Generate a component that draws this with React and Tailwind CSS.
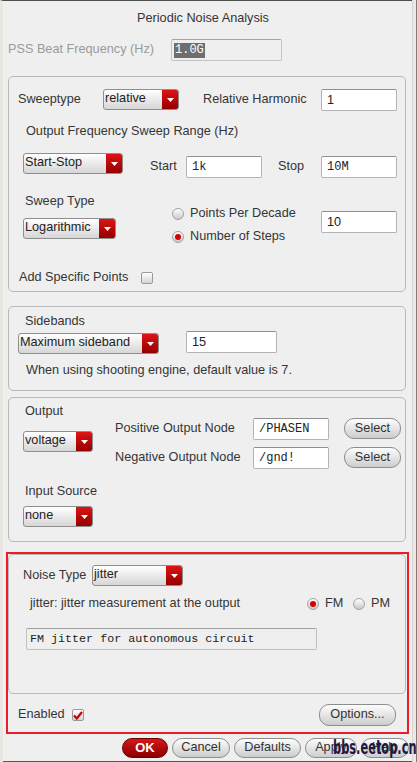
import React from 'react';

function Dropdown({ value, width }) {
  return (
    <div
      className="h-[21px] flex border border-[#8e8e8e] rounded-[3px] overflow-hidden bg-linear-to-b from-[#ffffff] to-[#d6d6d6] shrink-0"
      style={{ width }}
    >
      <div className="flex-1 pl-[1px] leading-[17px] text-[#222] text-[12.7px] whitespace-nowrap overflow-hidden">
        {value}
      </div>
      <div className="w-[16px] h-full bg-linear-to-b from-[#e01414] to-[#940000] flex items-center justify-center">
        <svg width="7" height="4" viewBox="0 0 7 4">
          <path d="M0 0 L7 0 L3.5 4 Z" fill="#fff" />
        </svg>
      </div>
    </div>
  );
}

function TextField({ value, width, mono = false }) {
  return (
    <div
      className={
        'h-[22px] bg-white border border-[#b4b4b4] border-t-[#8e8e8e] rounded-[2px] pl-[5px] leading-[20px] text-[#222] shrink-0 ' +
        (mono ? "font-['Liberation_Mono',monospace] text-[12px]" : 'text-[12.7px]')
      }
      style={{ width }}
    >
      {value}
    </div>
  );
}

function Radio({ checked }) {
  return (
    <div className="w-[12px] h-[12px] rounded-full border border-[#a2a2a2] bg-linear-to-b from-[#ffffff] to-[#c9c9c9] flex items-center justify-center shrink-0">
      {checked && <div className="w-[6px] h-[6px] rounded-full bg-[#d40000]" />}
    </div>
  );
}

function Checkbox({ checked }) {
  return (
    <div className="w-[12px] h-[12px] rounded-[2px] border border-[#9a9a9a] bg-linear-to-b from-[#ffffff] to-[#d4d4d4] flex items-center justify-center shrink-0">
      {checked && (
        <svg width="10" height="9" viewBox="0 0 10 9">
          <path d="M1 4.5 L3.8 7.5 L9 1" stroke="#d00000" strokeWidth="2.2" fill="none" />
        </svg>
      )}
    </div>
  );
}

function Button({ children, width, height = 21 }) {
  return (
    <div
      className="rounded-[10px] border border-[#8d8d8d] bg-linear-to-b from-[#fdfdfd] to-[#cdcdcd] flex items-center justify-center text-[12.7px] text-[#333] shrink-0"
      style={{ width, height }}
    >
      {children}
    </div>
  );
}

function App() {
  return (
    <div className="w-[418px] h-[762px] bg-[#efefef] flex relative overflow-hidden font-['Liberation_Sans',Arial,sans-serif] text-[12.7px] text-[#353535]">
      <div className="w-[412px] flex flex-col border-t border-[#4f4f4f] border-l-[3px] border-l-[#e9e7e2]">
        <div className="mt-[10px] leading-[14px] text-center pr-[9px]">Periodic Noise Analysis</div>

        {/* PSS beat frequency */}
        <div className="mt-[14px] flex items-center h-[22px] pl-[5px]">
          <div className="w-[163px] text-[#9a9a9a]">PSS Beat Frequency (Hz)</div>
          <div className="w-[111px] h-[22px] border border-[#c4c4c4] border-t-[#a6a6a6] rounded-[2px] pl-[2px] flex items-center">
            <span className="bg-[#6e6e6e] text-white font-['Liberation_Mono',monospace] text-[12px] leading-[15px] px-[1px]">1.0G</span>
          </div>
        </div>

        {/* Sweep group */}
        <div className="mt-[15px] ml-[5px] w-[398px] border border-[#b9b9b9] rounded-[5px] pt-[11px] pb-[6px]">
          <div className="flex items-center h-[23px] pl-[9px]">
            <div className="w-[85px]">Sweeptype</div>
            <Dropdown value="relative" width={76} />
            <div className="ml-[24px] w-[118px]">Relative Harmonic</div>
            <TextField value="1" width={76} />
          </div>
          <div className="mt-[13px] pl-[17px] leading-[14px]">Output Frequency Sweep Range (Hz)</div>
          <div className="mt-[15px] flex items-start h-[25px] pl-[14px]">
            <Dropdown value="Start-Stop" width={100} />
            <div className="ml-[27px] w-[36px] mt-[6px] leading-[14px]">Start</div>
            <div className="mt-[3px]">
              <TextField value="1k" width={76} mono />
            </div>
            <div className="ml-[16px] w-[43px] mt-[6px] leading-[14px]">Stop</div>
            <div className="mt-[3px]">
              <TextField value="10M" width={76} mono />
            </div>
          </div>
          <div className="mt-[16px] flex pl-[14px]">
            <div className="w-[149px] flex flex-col">
              <div className="ml-[2px] leading-[14px]">Sweep Type</div>
              <div className="mt-[10px]">
                <Dropdown value="Logarithmic" width={93} />
              </div>
            </div>
            <div className="w-[149px] pt-[8px] flex flex-col">
              <div className="h-[23px] flex items-center">
                <Radio />
                <span className="ml-[6px]">Points Per Decade</span>
              </div>
              <div className="h-[23px] flex items-center">
                <Radio checked />
                <span className="ml-[6px]">Number of Steps</span>
              </div>
            </div>
            <div className="mt-[17px]">
              <TextField value="10" width={76} />
            </div>
          </div>
          <div className="mt-[23px] flex items-center h-[14px] pl-[10px]">
            <div className="w-[122px]">Add Specific Points</div>
            <Checkbox />
          </div>
        </div>

        {/* Sidebands group */}
        <div className="mt-[14px] ml-[5px] w-[398px] border border-[#b9b9b9] rounded-[5px] pt-[7px] pb-[13px]">
          <div className="pl-[16px] leading-[14px]">Sidebands</div>
          <div className="mt-[3px] flex items-start h-[23px] pl-[9px]">
            <div className="mt-[2px]">
              <Dropdown value="Maximum sideband" width={141} />
            </div>
            <div className="ml-[27px]">
              <TextField value="15" width={91} />
            </div>
          </div>
          <div className="mt-[9px] pl-[17px] leading-[14px]">When using shooting engine, default value is 7.</div>
        </div>

        {/* Output group */}
        <div className="mt-[6px] ml-[5px] w-[398px] border border-[#b9b9b9] rounded-[5px] pt-[6px] pb-[14px] flex">
          <div className="w-[106px] pl-[14px] flex flex-col">
            <div className="ml-[2px] leading-[14px]">Output</div>
            <div className="mt-[13px]">
              <Dropdown value="voltage" width={70} />
            </div>
            <div className="mt-[32px] ml-[2px] leading-[14px]">Input Source</div>
            <div className="mt-[8px]">
              <Dropdown value="none" width={70} />
            </div>
          </div>
          <div className="pt-[13px] flex flex-col">
            <div className="h-[23px] flex items-center">
              <div className="w-[138px]">Positive Output Node</div>
              <TextField value="/PHASEN" width={76} mono />
              <div className="ml-[15px]">
                <Button width={57}>Select</Button>
              </div>
            </div>
            <div className="mt-[6px] h-[23px] flex items-center">
              <div className="w-[138px]">Negative Output Node</div>
              <TextField value="/gnd!" width={76} mono />
              <div className="ml-[15px]">
                <Button width={57}>Select</Button>
              </div>
            </div>
          </div>
        </div>

        {/* Highlighted noise section */}
        <div className="mt-[10px] ml-[3px] w-[403px] border-2 border-[#ec1c24] pb-[6px]">
          <div className="w-[398px] border border-[#b9b9b9] rounded-[5px] pt-[10px] pb-[43px]">
            <div className="h-[21px] flex items-center pl-[14px]">
              <div className="w-[69px]">Noise Type</div>
              <Dropdown value="jitter" width={91} />
            </div>
            <div className="mt-[10px] h-[16px] flex items-center pl-[21px]">
              <div className="w-[277px]">jitter: jitter measurement at the output</div>
              <Radio checked />
              <span className="ml-[6px] w-[28px]">FM</span>
              <Radio />
              <span className="ml-[6px]">PM</span>
            </div>
            <div className="mt-[16px] ml-[17px] w-[291px] h-[22px] border border-[#c0c0c0] border-t-[#a0a0a0] rounded-[2px] pl-[3px] leading-[20px] font-['Liberation_Mono',monospace] text-[11.7px] text-[#222]">
              FM jitter for autonomous circuit
            </div>
          </div>
          <div className="mt-[10px] h-[22px] flex items-center pl-[10px] pr-[11px]">
            <div className="w-[54px]">Enabled</div>
            <Checkbox checked />
            <div className="ml-auto">
              <Button width={77} height={22}>Options...</Button>
            </div>
          </div>
        </div>

        {/* Bottom buttons */}
        <div className="mt-[4px] h-[20px] flex justify-end gap-[4px] pr-[3px]">
          <div className="w-[46px] h-[20px] rounded-[10px] border border-[#6e0000] bg-linear-to-b from-[#d81818] to-[#8a0000] flex items-center justify-center text-white font-bold text-[13px]">
            OK
          </div>
          <Button width={58} height={20}>Cancel</Button>
          <Button width={67} height={20}>Defaults</Button>
          <Button width={52} height={20}>Apply</Button>
          <Button width={48} height={20}>Help</Button>
        </div>
        <div className="mt-[3px] h-[2px] bg-[#585858]" />
      </div>
      <div className="w-[6px] flex">
        <div className="w-[1px] bg-[#d6d6d6]" />
        <div className="w-[3px] bg-[#ece9e2]" />
        <div className="w-[1px] bg-[#857c6e]" />
        <div className="w-[1px] bg-[#dcd8d0]" />
      </div>
      <div className="absolute left-[333px] top-[736px] text-[20px] font-bold font-['DejaVu_Sans',sans-serif] text-[#1f1842] origin-left scale-x-[0.57] leading-[22px] whitespace-nowrap">
        bbs.eetop.cn
      </div>
    </div>
  );
}

export default App;
